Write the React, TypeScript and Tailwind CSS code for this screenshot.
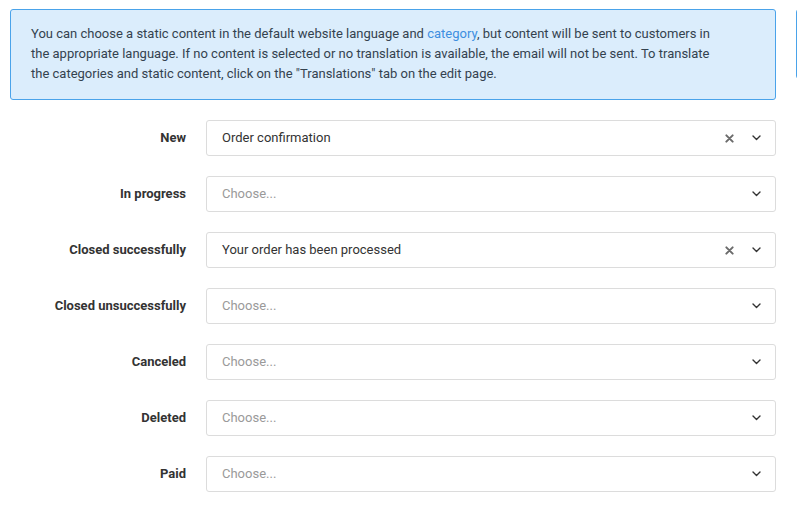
import React from 'react';

type Row = { label: string; value?: string };

const rows: Row[] = [
  { label: 'New', value: 'Order confirmation' },
  { label: 'In progress' },
  { label: 'Closed successfully', value: 'Your order has been processed' },
  { label: 'Closed unsuccessfully' },
  { label: 'Canceled' },
  { label: 'Deleted' },
  { label: 'Paid' },
];

const ClearIcon = () => (
  <svg width="9" height="9" viewBox="0 0 10 10" className="text-[#6b6b6b]">
    <path d="M1.5 1.5l7 7M8.5 1.5l-7 7" stroke="currentColor" strokeWidth="2.2" strokeLinecap="round" />
  </svg>
);

const Chevron = () => (
  <svg width="9" height="6" viewBox="0 0 9 6" className="text-[#333]">
    <path d="M1 1l3.5 3.5L8 1" fill="none" stroke="currentColor" strokeWidth="1.4" strokeLinecap="round" strokeLinejoin="round" />
  </svg>
);

const SelectField: React.FC<{ value?: string }> = ({ value }) => (
  <div className="flex h-[36px] flex-1 items-center rounded-[3px] border border-[#dcdcdc] bg-white pl-[15px] pr-[14px]">
    <span className={value ? 'flex-1 text-[13px] text-[#333]' : 'flex-1 text-[13px] text-[#9a9a9a]'}>
      {value ?? 'Choose...'}
    </span>
    {value && (
      <span className="mr-[18px] flex items-center">
        <ClearIcon />
      </span>
    )}
    <Chevron />
  </div>
);

export default function App() {
  return (
    <div className="flex h-[518px] w-[797px] overflow-hidden bg-white font-['Roboto',sans-serif]">
      <div className="ml-[10px] mt-[9px] w-[766px] shrink-0">
        {/* Info message */}
        <div className="rounded-[3px] border border-[#4aa3ea] bg-[#dbedfc] pb-[15px] pl-[20px] pr-[53px] pt-[14px] text-[13px] leading-[20px] text-[#34424f]">
          You can choose a static content in the default website language and{' '}
          <a href="#" className="text-[#3d8fe0]">category</a>, but content will be sent to customers in
          the appropriate language. If no content is selected or no translation is available, the email will not be sent. To translate
          the categories and static content, click on the "Translations" tab on the edit page.
        </div>

        {/* Status rows */}
        <div className="mt-[20px] flex flex-col gap-[20px]">
          {rows.map((row) => (
            <div key={row.label} className="flex items-center gap-[20px]">
              <label className="w-[176px] text-right text-[13px] font-bold text-[#333]">{row.label}</label>
              <SelectField value={row.value} />
            </div>
          ))}
        </div>
      </div>
      <div className="ml-[20px] mt-[9px] h-[70px] w-[20px] shrink-0 rounded-l-[3px] border border-[#4aa3ea] bg-white" />
    </div>
  );
}
